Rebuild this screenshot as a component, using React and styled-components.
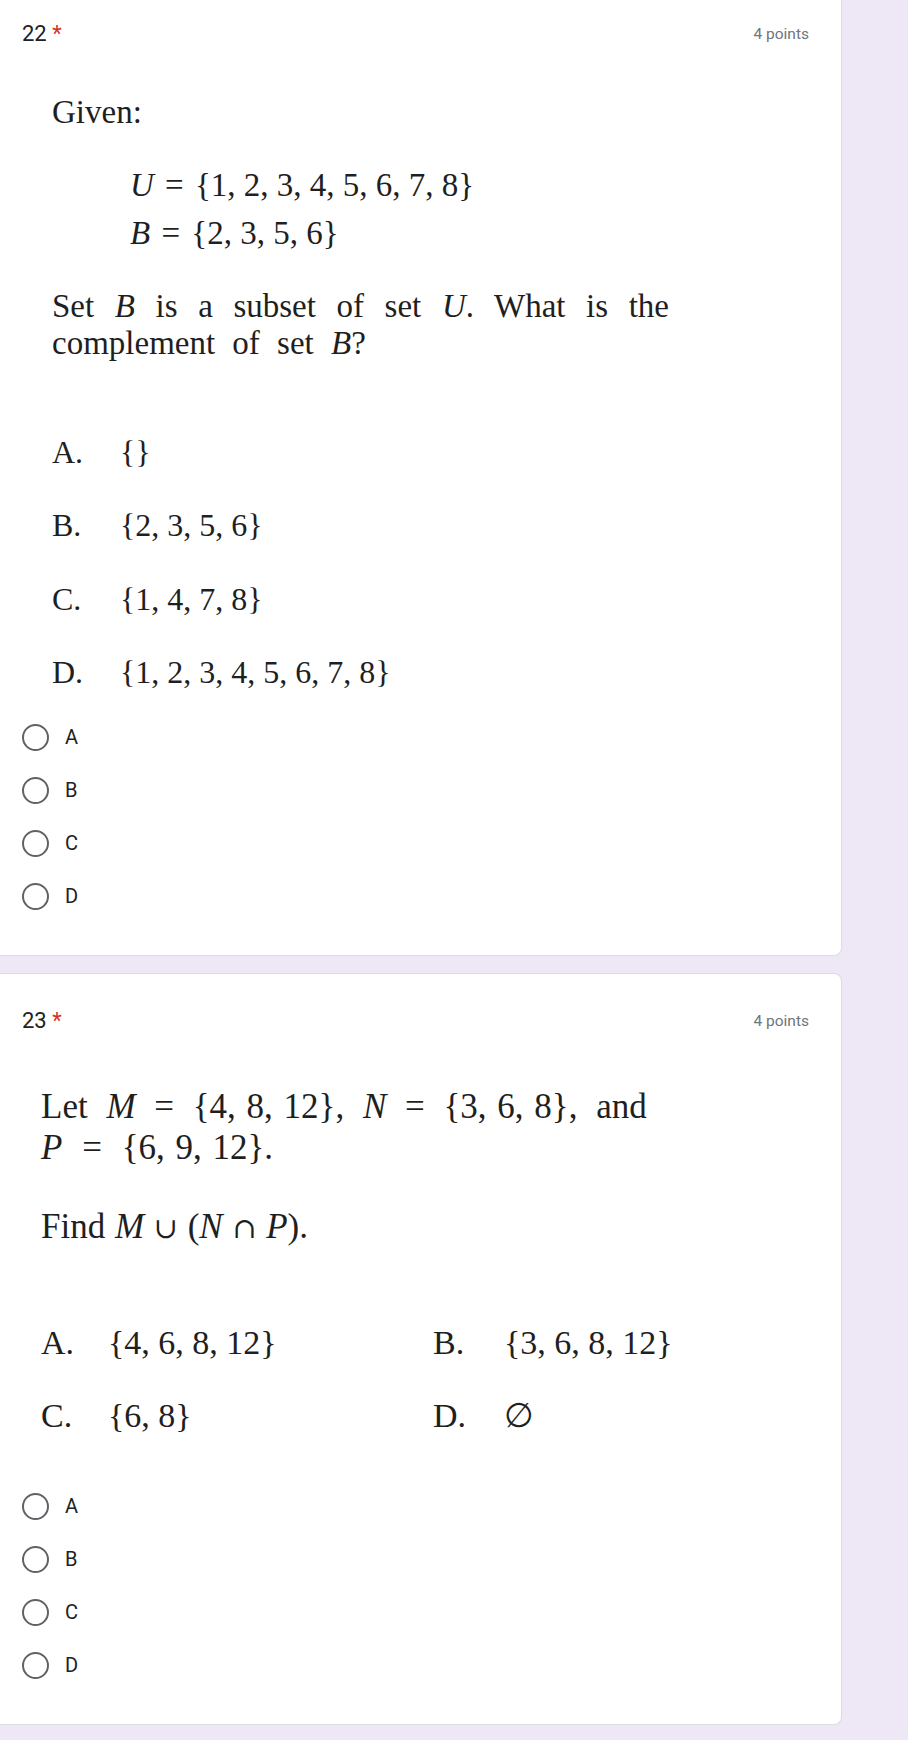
import React from "react";
import styled, { createGlobalStyle } from "styled-components";

const GlobalStyle = createGlobalStyle`
  html, body {
    margin: 0;
    padding: 0;
    background: #ede7f6;
  }
  body {
    font-family: Roboto, "Liberation Sans", sans-serif;
    color: #202124;
  }
`;

const Page = styled.div`
  width: 908px;
  height: 1740px;
  overflow: hidden;
  background: #ede7f6;
`;

const List = styled.div`
  margin-top: -14px;       // first card is scrolled a little off the top
  width: 842px;
  display: flex;
  flex-direction: column;
  gap: 17px;
`;

const Card = styled.section`
  background: #fff;
  border: 1px solid #dadce0;
  border-left: none;
  border-radius: 0 8px 8px 0;
  padding: 33px 32px 32px 22px;
`;

const Header = styled.div`
  height: 28px;
  display: flex;
  align-items: center;
  justify-content: space-between;
`;

const Title = styled.div`
  font-size: 22px;
  line-height: 28px;
  color: #202124;
`;

const Required = styled.span`
  color: #d93025;
`;

const Points = styled.div`
  font-size: 15.5px;
  color: #70757a;
`;

// the question "image": serif math text
const Figure = styled.div`
  font-family: "Liberation Serif", "Times New Roman", "DejaVu Serif", serif;
  color: #1f1f1f;
  font-size: ${(p) => p.$size}px;
  padding-left: ${(p) => p.$indent}px;
`;

const Line = styled.div`
  line-height: ${(p) => p.$lh}px;
  margin-top: ${(p) => p.$mt || 0}px;
  padding-left: ${(p) => p.$indent || 0}px;
  word-spacing: ${(p) => p.$ws || 0}px;
  white-space: nowrap;
`;

const Para = styled.p`
  margin: ${(p) => p.$mt}px 0 0;
  width: ${(p) => p.$width}px;
  line-height: ${(p) => p.$lh}px;
  text-align: justify;
  word-spacing: ${(p) => p.$ws}px;
`;

const Var = styled.i`
  font-style: italic;
`;

const SetLit = styled.span`
  word-spacing: ${(p) => p.$ws ?? 2}px;
`;

const Sym = styled.span`
  font-family: "DejaVu Serif", serif;
  font-size: 0.82em;
`;

const Choices = styled.div`
  margin-top: ${(p) => p.$mt}px;
  display: grid;
  grid-template-columns: ${(p) => p.$cols};
  row-gap: ${(p) => p.$gap}px;
  font-size: ${(p) => p.$size}px;
  line-height: ${(p) => p.$lh}px;
  white-space: nowrap;
`;

const Radios = styled.div`
  margin-top: ${(p) => p.$mt}px;
  display: flex;
  flex-direction: column;
`;

const Option = styled.label`
  height: 53px;
  display: flex;
  align-items: center;
  gap: 16px;
  font-size: 20px;
  color: #202124;
`;

const Radio = styled.span`
  width: 27px;
  height: 27px;
  box-sizing: border-box;
  border: 2px solid #5f6368;
  border-radius: 50%;
  flex-shrink: 0;
`;

const RadioGroup = ({ mt }) => (
  <Radios $mt={mt}>
    {["A", "B", "C", "D"].map((l) => (
      <Option key={l}>
        <Radio />
        {l}
      </Option>
    ))}
  </Radios>
);

const QHeader = ({ n }) => (
  <Header>
    <Title>
      {n} <Required>*</Required>
    </Title>
    <Points>4 points</Points>
  </Header>
);

const App = () => {
  return (
    <Page>
      <GlobalStyle />
      <List>
        <Card>
          <QHeader n={22} />
          <Figure $size={33} $indent={30}>
            <Line $lh={40} $mt={44}>Given:</Line>
            <Line $lh={48} $mt={29} $indent={78} $ws={3}>
              <Var>U</Var> = <SetLit $ws={0}>{"{1, 2, 3, 4, 5, 6, 7, 8}"}</SetLit>
            </Line>
            <Line $lh={48} $indent={78} $ws={3}>
              <Var>B</Var> = <SetLit $ws={0}>{"{2, 3, 5, 6}"}</SetLit>
            </Line>
            <Para $mt={31} $width={617} $lh={37} $ws={9}>
              Set <Var>B</Var> is a subset of set <Var>U</Var>. What is the
              complement of set <Var>B</Var>?
            </Para>
            <Choices $mt={70} $cols="68px auto" $gap={33.3} $lh={40} $size={32}>
              <span>A.</span>
              <span>{"{}"}</span>
              <span>B.</span>
              <span>{"{2, 3, 5, 6}"}</span>
              <span>C.</span>
              <span>{"{1, 4, 7, 8}"}</span>
              <span>D.</span>
              <span>{"{1, 2, 3, 4, 5, 6, 7, 8}"}</span>
            </Choices>
          </Figure>
          <RadioGroup mt={19} />
        </Card>

        <Card>
          <QHeader n={23} />
          <Figure $size={35} $indent={19}>
            <Line $lh={41} $mt={51} $ws={10}>
              Let <Var>M</Var> = <SetLit>{"{4, 8, 12}"}</SetLit>, <Var>N</Var> ={" "}
              <SetLit>{"{3, 6, 8}"}</SetLit>, and
            </Line>
            <Line $lh={41} $ws={11}>
              <Var>P</Var> = <SetLit>{"{6, 9, 12}"}</SetLit>.
            </Line>
            <Line $lh={41} $mt={38} $ws={1}>
              Find <Var>M</Var> <Sym>∪</Sym> (<Var>N</Var> <Sym>∩</Sym> <Var>P</Var>).
            </Line>
            <Choices $mt={73} $cols="67px 325px 71px auto" $gap={32} $lh={41} $size={34}>
              <span>A.</span>
              <span>{"{4, 6, 8, 12}"}</span>
              <span>B.</span>
              <span>{"{3, 6, 8, 12}"}</span>
              <span>C.</span>
              <span>{"{6, 8}"}</span>
              <span>D.</span>
              <span>∅</span>
            </Choices>
          </Figure>
          <RadioGroup mt={44} />
        </Card>
      </List>
    </Page>
  );
};

export default App;
